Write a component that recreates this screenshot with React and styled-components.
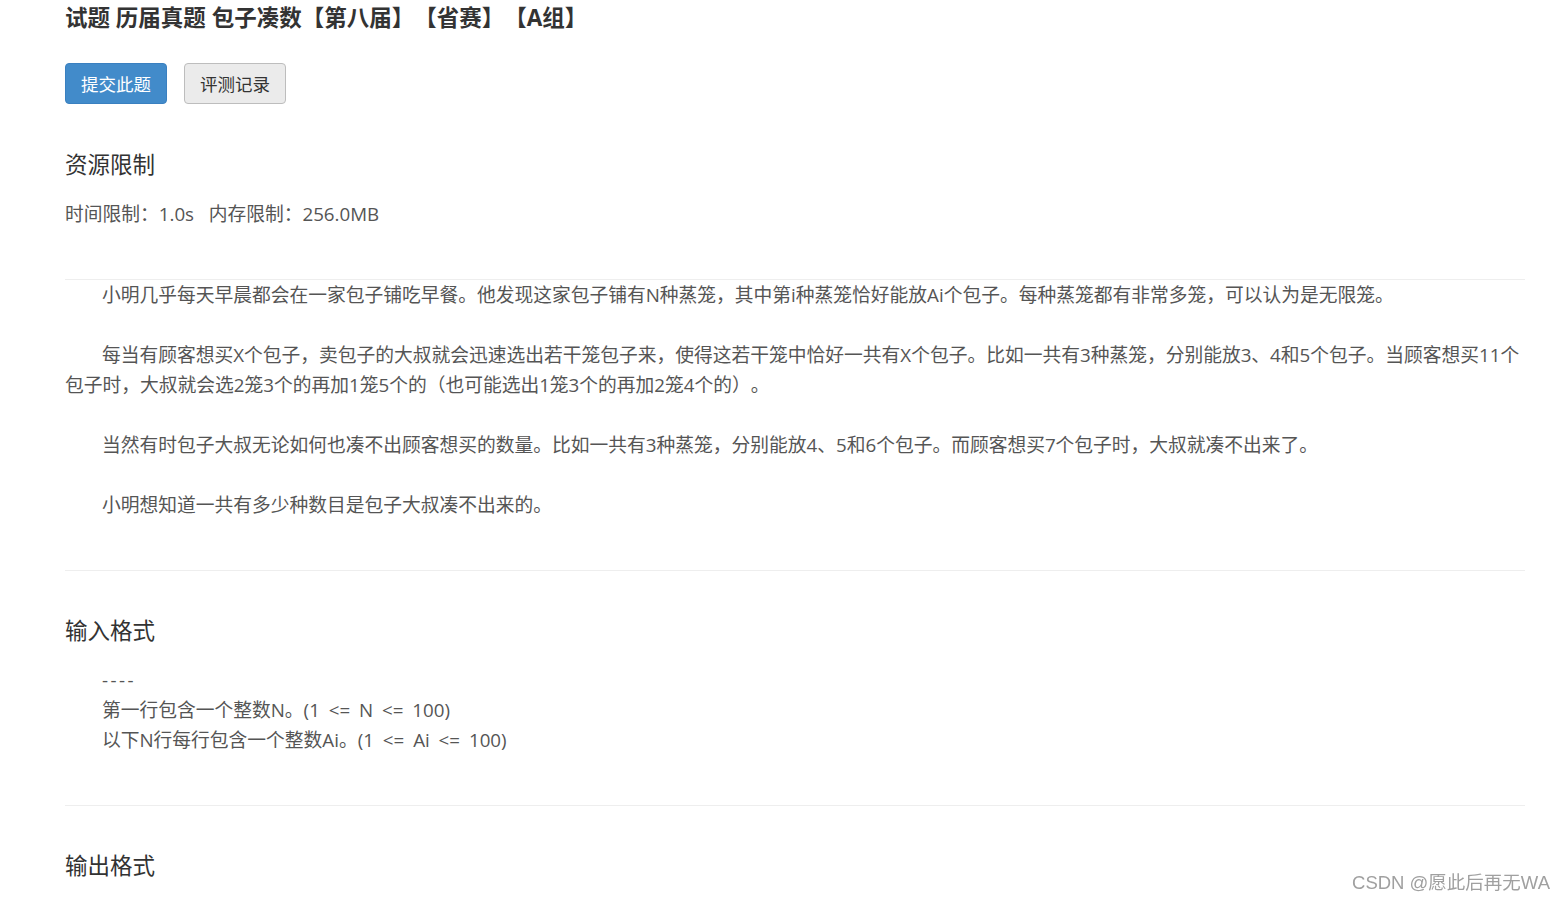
import React from "react";
import styled, { createGlobalStyle } from "styled-components";

const GlobalStyle = createGlobalStyle`
  html, body {
    margin: 0;
    padding: 0;
    background: #fff;
  }
  body {
    font-family: "Open Sans", "Noto Sans CJK SC", sans-serif;
    color: #555;
    text-spacing-trim: space-all;
  }
`;

const paragraphs = [
  "小明几乎每天早晨都会在一家包子铺吃早餐。他发现这家包子铺有N种蒸笼，其中第i种蒸笼恰好能放Ai个包子。每种蒸笼都有非常多笼，可以认为是无限笼。",
  "每当有顾客想买X个包子，卖包子的大叔就会迅速选出若干笼包子来，使得这若干笼中恰好一共有X个包子。比如一共有3种蒸笼，分别能放3、4和5个包子。当顾客想买11个包子时，大叔就会选2笼3个的再加1笼5个的（也可能选出1笼3个的再加2笼4个的）。",
  "当然有时包子大叔无论如何也凑不出顾客想买的数量。比如一共有3种蒸笼，分别能放4、5和6个包子。而顾客想买7个包子时，大叔就凑不出来了。",
  "小明想知道一共有多少种数目是包子大叔凑不出来的。",
];

const inputLines = ["第一行包含一个整数N。(1 <= N <= 100)", "以下N行每行包含一个整数Ai。(1 <= Ai <= 100)"];

const App = () => {
  return (
    <Page>
      <GlobalStyle />
      <Title>试题 历届真题 包子凑数【第八届】【省赛】【A组】</Title>
      <Actions>
        <Button $primary>提交此题</Button>
        <Button>评测记录</Button>
      </Actions>

      <SectionTitle $top={46}>资源限制</SectionTitle>
      <Limits>时间限制：1.0s&nbsp;&nbsp;&nbsp;内存限制：256.0MB</Limits>

      <Divider />
      <Description>
        {paragraphs.map((text, i) => (
          <Para key={i}>{text}</Para>
        ))}
      </Description>

      <Divider />
      <SectionTitle $top={45}>输入格式</SectionTitle>
      <Format>
        <Dashes>----</Dashes>
        {inputLines.map((line, i) => (
          <div key={i}>{line}</div>
        ))}
      </Format>

      <Divider />
      <SectionTitle $top={45}>输出格式</SectionTitle>

      <Watermark>CSDN @愿此后再无WA</Watermark>
    </Page>
  );
};

const Page = styled.div`
  width: 1460px;
  padding: 0 40px 40px 65px;
  font-size: 18.75px;
  line-height: 30px;
`;

const Title = styled.h2`
  margin: 0;
  font-size: 22.5px;
  line-height: 36px;
  font-weight: 700;
  color: #333;
`;

const Actions = styled.div`
  display: flex;
  gap: 17px;
  margin-top: 27px;
`;

const Button = styled.button`
  height: 41px;
  width: 102px;
  padding: 0;
  border-radius: 4px;
  font-family: "Open Sans", "Noto Sans CJK SC", sans-serif;
  font-size: 17.5px;
  cursor: pointer;
  border: 1px solid ${(p) => (p.$primary ? "#3a80c0" : "#bdbdbd")};
  background: ${(p) => (p.$primary ? "#428bca" : "#ebebeb")};
  color: ${(p) => (p.$primary ? "#fff" : "#333")};
`;

const SectionTitle = styled.h3`
  margin: ${(p) => p.$top}px 0 0;
  font-size: 22.5px;
  line-height: 30px;
  font-weight: 400;
  color: #333;
`;

const Limits = styled.div`
  margin-top: 19px;
  color: #555;
`;

const Divider = styled.hr`
  margin: 50px 0 0;
  border: 0;
  border-top: 1px solid #eee;
  height: 0;
`;

const Description = styled.div`
  display: flex;
  flex-direction: column;
  gap: 30px;
`;

const Para = styled.p`
  margin: 0;
  text-indent: 37px;
`;

const Format = styled.div`
  margin-top: 19px;
  padding-left: 37px;
  word-spacing: 4px;
`;

const Dashes = styled.div`
  letter-spacing: 2.5px;
`;

const Watermark = styled.div`
  position: fixed;
  right: 15px;
  bottom: 3px;
  font-family: "Liberation Sans", "Noto Sans CJK SC", sans-serif;
  font-size: 18.5px;
  color: #a0a0a0;
  text-shadow: 0 0 1px #fff;
`;

export default App;
